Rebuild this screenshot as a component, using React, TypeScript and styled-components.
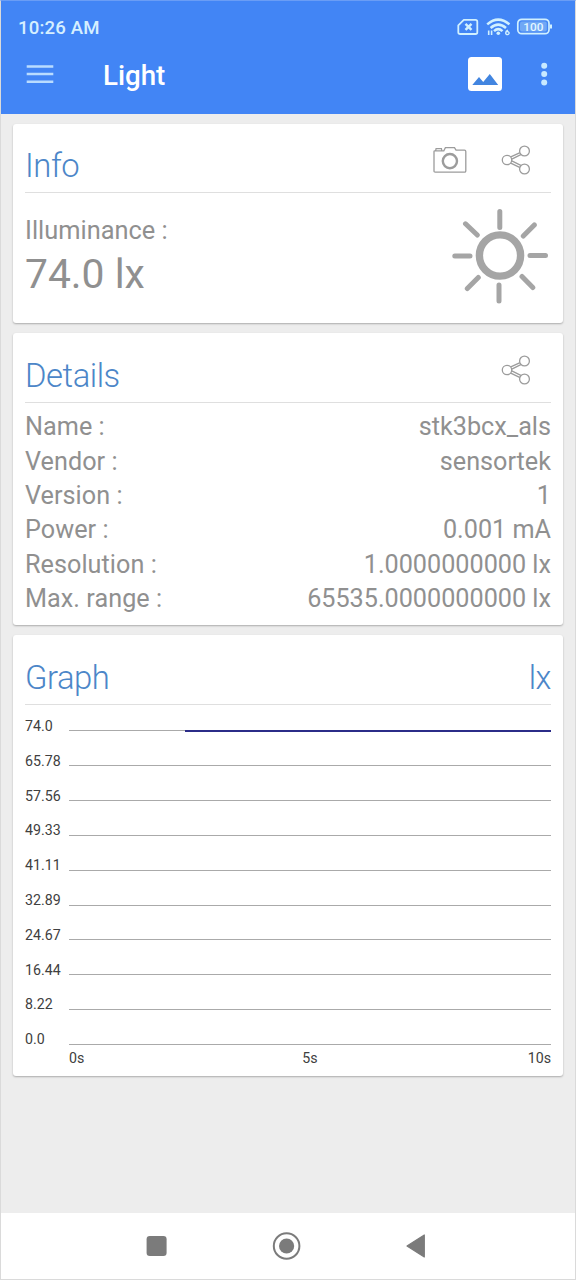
import React from "react";
import styled, { createGlobalStyle } from "styled-components";

const GlobalStyle = createGlobalStyle`
  * { box-sizing: border-box; }
  body { margin: 0; font-family: Roboto, "Liberation Sans", sans-serif; background: #ededed; }
`;

const Screen = styled.div`
  width: 576px;
  height: 1280px;
  display: flex;
  flex-direction: column;
  background: #ededed;
  border: 1px solid #dadada;
  border-top-color: #6a9df5;
  overflow: hidden;
`;

const Header = styled.header`
  height: 112.5px;
  flex: none;
  margin-left: -1px;
  margin-right: -1px;
  background: #4285f5;
`;

const StatusBar = styled.div`
  height: 52px;
  padding: 0 23px 0 18px;
  display: flex;
  align-items: center;
  color: #d5efff;
  font-size: 18.6px;
  font-weight: 500;
`;

const Clock = styled.span`
  flex: 1;
  padding-top: 2px;
  letter-spacing: 0.15px;
`;

const StatusIcons = styled.svg`
  display: block;
`;

const Toolbar = styled.div`
  height: 42px;
  padding: 0 28px 0 26px;
  display: flex;
  align-items: center;
`;

const MenuButton = styled.div`
  width: 77px;
  display: flex;
`;

const AppTitle = styled.h1`
  flex: 1;
  margin: 0;
  padding-top: 3px;
  color: #fff;
  font-size: 27.7px;
  font-weight: 500;
`;

const ImageButton = styled.div`
  display: flex;
  margin-right: 38px;
`;

const Content = styled.main`
  flex: 1;
  padding: 10.5px 12px 0;
  display: flex;
  flex-direction: column;
  gap: 10px;
`;

const Card = styled.section<{ $height: number }>`
  height: ${(p) => p.$height}px;
  padding: 0 12px;
  background: #fff;
  border-radius: 3px;
  box-shadow: 0 1px 2px rgba(0, 0, 0, 0.28);
`;

const CardHeader = styled.div<{ $compact?: boolean }>`
  height: ${(p) => (p.$compact ? 69 : 70)}px;
  padding-top: ${(p) => (p.$compact ? 16 : 17)}px;
  display: flex;
  align-items: center;
  border-bottom: 1px solid #dfdfdf;
`;

const CardTitle = styled.h2`
  flex: 1;
  margin: 0;
  color: #4c86c8;
  font-size: 32.8px;
  font-weight: 300;
  letter-spacing: -0.45px;
`;

const Unit = styled.span`
  color: #4c86c8;
  font-size: 32.5px;
  font-weight: 300;
  letter-spacing: -0.4px;
`;

const Actions = styled.div`
  display: flex;
  align-items: center;
  gap: 34px;
  padding-right: 20px;
  margin-top: -12px;
`;

const InfoBody = styled.div`
  display: flex;
  justify-content: space-between;
  padding: 15px 2px 0 0;
`;

const Reading = styled.div`
  display: flex;
  flex-direction: column;
  color: #909090;
`;

const ReadingLabel = styled.span`
  margin-top: 7px;
  font-size: 25.4px;
  line-height: 30px;
`;

const ReadingValue = styled.span`
  margin-top: 6px;
  font-size: 40.8px;
  line-height: 46px;
`;

const DetailList = styled.dl`
  margin: 0;
  padding-top: 6.5px;
`;

const DetailRow = styled.div`
  height: 34.4px;
  display: flex;
  justify-content: space-between;
  align-items: center;
  color: #909090;
  font-size: 25.2px;
`;

const DetailTerm = styled.dt`
  letter-spacing: 0.05px;
`;

const DetailValue = styled.dd`
  margin: 0;
`;

const Chart = styled.div`
  display: grid;
  grid-template-columns: 44px 482px;
  padding-top: 4px;
  color: #404040;
  font-size: 14.2px;
`;

const YAxis = styled.div`
  display: flex;
  flex-direction: column;
`;

const YLabel = styled.span`
  height: 34.8px;
  line-height: 35.6px;
`;

const XAxis = styled.div`
  grid-column: 2;
  display: grid;
  grid-template-columns: 1fr 1fr 1fr;
  margin-top: -8px;
  line-height: 18px;

  span:nth-child(2) {
    text-align: center;
  }

  span:last-child {
    text-align: right;
  }
`;

const NavBar = styled.nav`
  height: 66.5px;
  flex: none;
  display: flex;
  justify-content: center;
  background: #fff;
`;

const ShareIcon = () => (
  <svg width="30" height="30" viewBox="0 0 30 30" fill="none" stroke="#9c9c9c" strokeWidth="1.3">
    <path d="M9.2 12.2 19.1 7.6M10.3 14.3 20.3 9.4M10.3 15.7 20.3 20.6M9.2 17.8 19.1 22.6" />
    <circle cx="6" cy="15" r="4.7" fill="#fff" />
    <circle cx="23.5" cy="6" r="4.9" fill="#fff" />
    <circle cx="23.5" cy="24" r="4.9" fill="#fff" />
  </svg>
);

const CameraIcon = () => (
  <svg width="34" height="28" viewBox="0 0 34 28" fill="none" stroke="#9c9c9c" strokeWidth="1.3">
    <path d="M1.7 4.8H10.8L12.4 1.6H21.5L23 4.1H31.5Q32.8 4.1 32.8 5.4V25Q32.8 26.2 31.5 26.2H2.2Q1 26.2 1 25V5.5Q1 4.8 1.7 4.8ZM2.6 4.8 3.1 2.6H8.4L8.9 4.8" />
    <circle cx="16.9" cy="15.1" r="7.1" strokeWidth="2.4" />
  </svg>
);

const SunIcon = () => (
  <svg width="98" height="96" viewBox="0 0 98 96" fill="none" stroke="#a5a5a5" strokeWidth="5" strokeLinecap="round">
    <circle cx="49" cy="47.5" r="20.6" strokeWidth="7.4" />
    <path d="M48.8 3.4V19.5M48 77V93M3.8 48H19M79 47.5H94.5M14.5 15.8 26.3 27M83.3 16.9 72.3 28M16.3 80.5 27.3 69.5M71 68.5 81.8 79.5" />
  </svg>
);

const details: [string, string][] = [
  ["Name :", "stk3bcx_als"],
  ["Vendor :", "sensortek"],
  ["Version :", "1"],
  ["Power :", "0.001 mA"],
  ["Resolution :", "1.0000000000 lx"],
  ["Max. range :", "65535.0000000000 lx"],
];

const levels = ["74.0", "65.78", "57.56", "49.33", "41.11", "32.89", "24.67", "16.44", "8.22", "0.0"];

export default function App() {
  return (
    <>
      <GlobalStyle />
      <Screen>
        <Header>
          <StatusBar>
            <Clock>10:26 AM</Clock>
            <StatusIcons width="96" height="20" viewBox="0 0 96 20" fill="none" stroke="#d0f0ff" strokeWidth="1.8">
              <path d="M6.8 2.9H18.5Q20.3 2.9 20.3 4.7V15.2Q20.3 17 18.5 17H3.2Q1.3 17 1.3 15.2V8.3Z" strokeLinejoin="round" />
              <path d="M8.5 6.8 14.5 12.8M14.5 6.8 8.5 12.8" strokeWidth="2.4" />
              <path d="M30.2 7.4Q41.2-2.2 52.4 7.4M33.6 11Q41.2 4.2 49 11M37 14.1Q41.2 10.2 45.5 14.1" strokeWidth="2.5" />
              <circle cx="41.3" cy="16.2" r="1.8" fill="#d0f0ff" stroke="none" />
              <path d="M31.7 13.4V18M34.6 13.4V18" strokeWidth="1.6" />
              <path d="M51 13.2Q48.6 14 48.7 16.2A1.7 1.5 0 1 0 49.5 14.8" strokeWidth="1.4" />
              <rect x="60.8" y="2.3" width="31.2" height="14.4" rx="4" strokeWidth="1.7" />
              <rect x="63" y="4.5" width="26.8" height="10" rx="2" fill="#70a8f5" stroke="none" />
              <path d="M94 7.4V11.6" strokeWidth="2" />
              <text x="76.3" y="13.7" textAnchor="middle" fontSize="11.8" fontWeight="500" fill="#e4f7ff" stroke="none">100</text>
            </StatusIcons>
          </StatusBar>
          <Toolbar>
            <MenuButton>
              <svg width="28" height="20" viewBox="0 0 28 20" stroke="#b9dcff" strokeWidth="2.5">
                <path d="M.7 2.4H27.3M.7 10H27.3M.7 17.7H27.3" />
              </svg>
            </MenuButton>
            <AppTitle>Light</AppTitle>
            <ImageButton>
              <svg width="34" height="34" viewBox="0 0 34 34">
                <rect width="34" height="34" rx="3.5" fill="#fff" />
                <path d="M4.3 28 11 20 15.2 24.9 21.8 17 30.2 28Z" fill="#4285e0" />
              </svg>
            </ImageButton>
            <svg width="8" height="26" viewBox="0 0 8 26" fill="#c8e9ff">
              <circle cx="4.2" cy="4.8" r="3" />
              <circle cx="4.2" cy="13.1" r="3" />
              <circle cx="4.2" cy="21.5" r="3" />
            </svg>
          </Toolbar>
        </Header>

        <Content>
          <Card $height={199}>
            <CardHeader $compact>
              <CardTitle>Info</CardTitle>
              <Actions>
                <CameraIcon />
                <ShareIcon />
              </Actions>
            </CardHeader>
            <InfoBody>
              <Reading>
                <ReadingLabel>Illuminance :</ReadingLabel>
                <ReadingValue>74.0 lx</ReadingValue>
              </Reading>
              <SunIcon />
            </InfoBody>
          </Card>

          <Card $height={292}>
            <CardHeader>
              <CardTitle>Details</CardTitle>
              <Actions>
                <ShareIcon />
              </Actions>
            </CardHeader>
            <DetailList>
              {details.map(([term, value]) => (
                <DetailRow key={term}>
                  <DetailTerm>{term}</DetailTerm>
                  <DetailValue>{value}</DetailValue>
                </DetailRow>
              ))}
            </DetailList>
          </Card>

          <Card $height={441}>
            <CardHeader>
              <CardTitle>Graph</CardTitle>
              <Unit>lx</Unit>
            </CardHeader>
            <Chart>
              <YAxis>
                {levels.map((level) => (
                  <YLabel key={level}>{level}</YLabel>
                ))}
              </YAxis>
              <svg width="482" height="348" viewBox="0 0 482 348" shapeRendering="crispEdges">
                {levels.map((level, i) => (
                  <rect key={level} y={Math.round(21.4 + i * 34.84)} width="482" height="1" fill="#aaa" />
                ))}
                <rect x="115.5" y="21" width="366.5" height="2" fill="#2b2c88" />
              </svg>
              <XAxis>
                <span>0s</span>
                <span>5s</span>
                <span>10s</span>
              </XAxis>
            </Chart>
          </Card>
        </Content>

        <NavBar>
          <svg width="300" height="66" viewBox="138 1213 300 66" fill="#7b7b7b">
            <rect x="146.6" y="1236" width="20" height="20" rx="3.2" />
            <circle cx="286.6" cy="1246" r="12.8" fill="none" stroke="#7b7b7b" strokeWidth="2" />
            <circle cx="286.6" cy="1246" r="7.6" />
            <path d="M407 1246 424.3 1235V1257Z" stroke="#7b7b7b" strokeWidth="1.2" strokeLinejoin="round" />
          </svg>
        </NavBar>
      </Screen>
    </>
  );
}
